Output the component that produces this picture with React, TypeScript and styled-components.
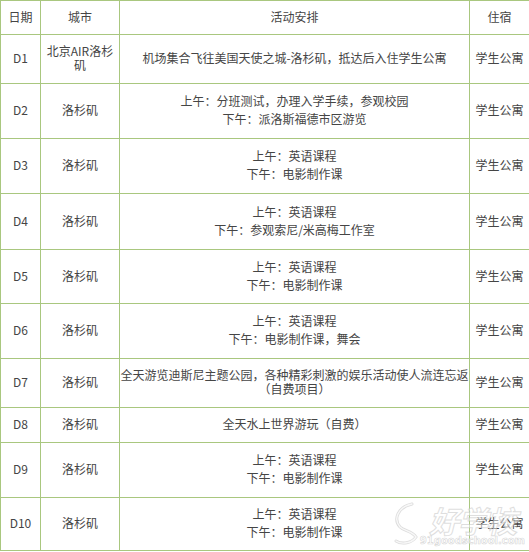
import styled, { createGlobalStyle } from 'styled-components';

const LINE_COLOR = '#a9c77f';
const TEXT_COLOR = '#454545';

type Day = {
  day: string;
  city: string;
  plan: string[];
  stay: string;
  height: number;
};

const DAYS: Day[] = [
  { day: 'D1', city: '北京AIR洛杉\n矶', plan: ['机场集合飞往美国天使之城-洛杉矶，抵达后入住学生公寓'], stay: '学生公寓', height: 49 },
  { day: 'D2', city: '洛杉矶', plan: ['上午：分班测试，办理入学手续，参观校园', '下午：派洛斯福德市区游览'], stay: '学生公寓', height: 55 },
  { day: 'D3', city: '洛杉矶', plan: ['上午：英语课程', '下午：电影制作课'], stay: '学生公寓', height: 55 },
  { day: 'D4', city: '洛杉矶', plan: ['上午：英语课程', '下午：参观索尼/米高梅工作室'], stay: '学生公寓', height: 56 },
  { day: 'D5', city: '洛杉矶', plan: ['上午：英语课程', '下午：电影制作课'], stay: '学生公寓', height: 54 },
  { day: 'D6', city: '洛杉矶', plan: ['上午：英语课程', '下午：电影制作课，舞会'], stay: '学生公寓', height: 55 },
  { day: 'D7', city: '洛杉矶', plan: ['全天游览迪斯尼主题公园，各种精彩刺激的娱乐活动使人流连忘返\n（自费项目）'], stay: '学生公寓', height: 49 },
  { day: 'D8', city: '洛杉矶', plan: ['全天水上世界游玩（自费）'], stay: '学生公寓', height: 35 },
  { day: 'D9', city: '洛杉矶', plan: ['上午：英语课程', '下午：电影制作课'], stay: '学生公寓', height: 55 },
  { day: 'D10', city: '洛杉矶', plan: ['上午：英语课程', '下午：电影制作课'], stay: '学生公寓', height: 53 },
];

const GlobalStyle = createGlobalStyle`
  html, body {
    margin: 0;
    padding: 0;
    background: #fff;
  }
  body {
    font-family: "Noto Sans CJK SC", "Noto Sans", sans-serif;
    font-size: 12px;
    color: ${TEXT_COLOR};
  }
`;

const Wrapper = styled.div`
  position: relative;
  width: 529px;
`;

const Table = styled.table`
  width: 529px;
  border-collapse: collapse;
  table-layout: fixed;
`;

const Row = styled.tr<{ $h: number }>`
  height: ${p => p.$h}px;
`;

const Cell = styled.td`
  border: 1px solid ${LINE_COLOR};
  padding: 0 0 2px;
  text-align: center;
  vertical-align: middle;
  line-height: 14px;
  white-space: pre;
`;

const HeadCell = styled(Cell).attrs({ as: 'th' })`
  font-weight: normal;
`;

const Para = styled.div`
  white-space: pre;
  & + & {
    margin-top: 4px;
  }
`;

const Watermark = styled.div`
  position: absolute;
  right: 4px;
  bottom: 4px;
  display: flex;
  align-items: flex-end;
  pointer-events: none;
`;

const MarkText = styled.div`
  display: flex;
  flex-direction: column;
  align-items: center;
`;

const MarkBig = styled.span`
  font-size: 30px;
  font-weight: bold;
  font-style: italic;
  line-height: 30px;
  color: rgba(255, 255, 255, 0.5);
  -webkit-text-stroke: 1px rgba(190, 190, 190, 0.5);
  letter-spacing: -1px;
`;

const MarkSmall = styled.span`
  font-family: "DejaVu Sans", sans-serif;
  font-size: 10px;
  font-weight: bold;
  line-height: 12px;
  color: rgba(255, 255, 255, 0.6);
  -webkit-text-stroke: 0.6px rgba(180, 180, 180, 0.55);
`;

const Swirl = () => (
  <svg width="30" height="46" viewBox="0 0 30 46" fill="none">
    <path
      d="M22 3 C8 6 3 18 10 26 C14 30 22 30 26 36 C22 42 12 44 6 40"
      stroke="rgba(185,185,185,0.5)"
      strokeWidth="3"
      strokeLinecap="round"
    />
    <path
      d="M22 3 C8 6 3 18 10 26 C14 30 22 30 26 36 C22 42 12 44 6 40"
      stroke="rgba(255,255,255,0.8)"
      strokeWidth="1.4"
      strokeLinecap="round"
    />
  </svg>
);

export default function App() {
  return (
    <>
      <GlobalStyle />
      <Wrapper>
        <Table>
          <colgroup>
            <col style={{ width: 40 }} />
            <col style={{ width: 79 }} />
            <col style={{ width: 350 }} />
            <col style={{ width: 60 }} />
          </colgroup>
          <thead>
            <Row $h={34}>
              <HeadCell>日期</HeadCell>
              <HeadCell>城市</HeadCell>
              <HeadCell>活动安排</HeadCell>
              <HeadCell>住宿</HeadCell>
            </Row>
          </thead>
          <tbody>
            {DAYS.map(d => (
              <Row key={d.day} $h={d.height}>
                <Cell>{d.day}</Cell>
                <Cell>{d.city}</Cell>
                <Cell>
                  {d.plan.map((p, i) => (
                    <Para key={i}>{p}</Para>
                  ))}
                </Cell>
                <Cell>{d.stay}</Cell>
              </Row>
            ))}
          </tbody>
        </Table>
        <Watermark>
          <Swirl />
          <MarkText>
            <MarkBig>好学校</MarkBig>
            <MarkSmall>91goodschool.com</MarkSmall>
          </MarkText>
        </Watermark>
      </Wrapper>
    </>
  );
}
